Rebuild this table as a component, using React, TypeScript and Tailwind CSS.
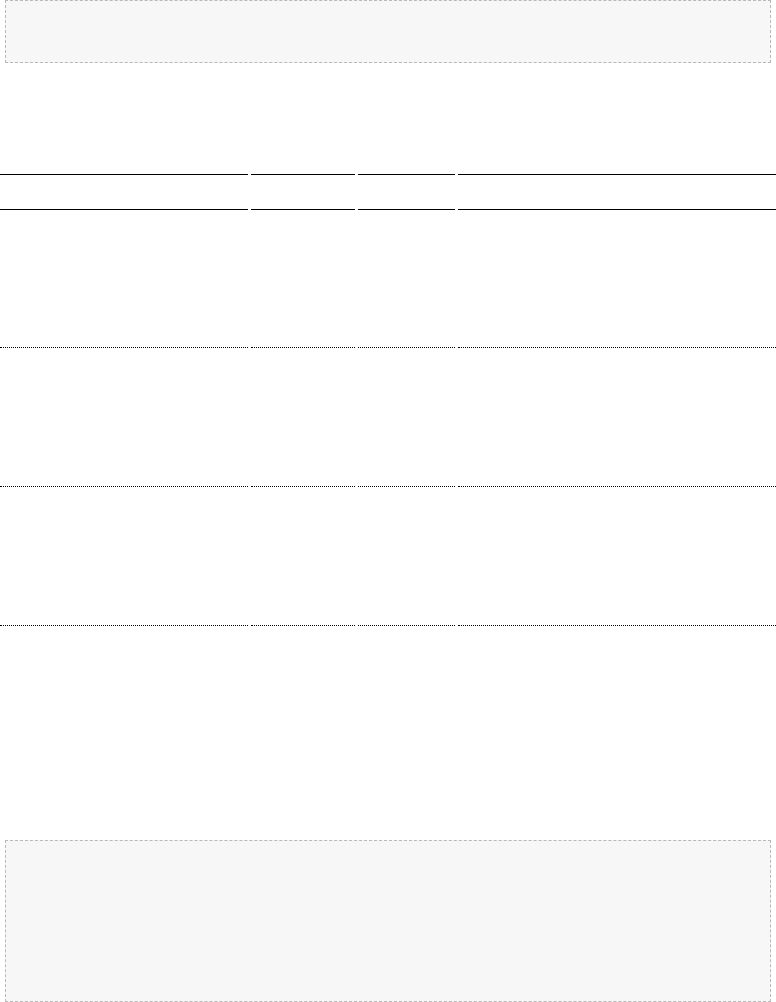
const columns = [
  { key: 'name', width: 'w-[248px]' },
  { key: 'type', width: 'w-[104px]' },
  { key: 'size', width: 'w-[97px]' },
  { key: 'notes', width: '' }
];

const rows = ['row-1', 'row-2', 'row-3'];

function Placeholder({ className }: { className: string }) {
  return (
    <div
      className={`mx-[5px] border border-dashed border-[#b8b8b8] bg-[#f7f7f7] ${className}`}
    />
  );
}

export default function App() {
  return (
    <div className="min-h-[1002px] w-[776px] bg-white font-['Liberation_Sans',sans-serif] text-black">
      <Placeholder className="h-[63px]" />
      <div className="h-[111px]" />
      <div className="overflow-hidden">
        <table className="-mx-[3px] -my-[2px] w-[782px] table-fixed border-separate border-spacing-x-[3px] border-spacing-y-[2px]">
          <thead>
            <tr>
              {columns.map((col) => (
                <th
                  key={col.key}
                  className={`${col.width} h-[36px] border-y border-black p-0`}
                />
              ))}
            </tr>
          </thead>
          <tbody>
            {rows.map((row, i) => (
              <tr key={row}>
                {columns.map((col) => (
                  <td
                    key={`${row}-${col.key}`}
                    className={`${i === 0 ? 'h-[136px]' : 'h-[137px]'} border-b border-dotted border-black p-0`}
                  />
                ))}
              </tr>
            ))}
          </tbody>
        </table>
      </div>
      <div className="h-[214px]" />
      <Placeholder className="h-[162px]" />
    </div>
  );
}
